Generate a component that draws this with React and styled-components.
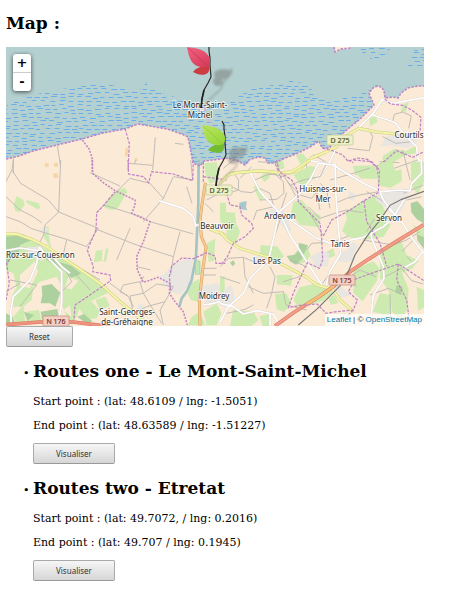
import React from 'react';
import styled, { createGlobalStyle } from 'styled-components';

const GlobalStyle = createGlobalStyle`
  body {
    margin: 0;
    background: #fff;
    color: #000;
    font: 11px/13px 'DejaVu Serif', serif;
  }
`;

const Page = styled.main`
  padding: 13px 28px 21px 6px;
`;

const Heading = styled.h2`
  margin: 0 0 14px;
  font-size: 17px;
  line-height: 20px;
  font-weight: bold;
`;

const MapFrame = styled.section`
  position: relative;
  height: 279px;
  overflow: hidden;
  background: #b5d0d0;
`;

const MapDrawing = styled.svg`
  display: block;
  width: 100%;
  height: 100%;
`;

const ZoomControl = styled.div`
  position: absolute;
  top: 7px;
  left: 7px;
  display: flex;
  flex-direction: column;
  border-radius: 3px;
  background: #fff;
  box-shadow: 0 1px 4px rgba(0, 0, 0, 0.65);
`;

const ZoomButton = styled.button`
  width: 18px;
  height: 18px;
  padding: 0;
  border: 0;
  background: none;
  color: #000;
  font: bold 13px/18px 'DejaVu Sans', sans-serif;

  & + & {
    height: 19px;
    border-top: 1px solid #ccc;
  }
`;

const Attribution = styled.div`
  position: absolute;
  right: 0;
  bottom: 0;
  padding: 0 2px;
  background: rgba(255, 255, 255, 0.7);
  color: #333;
  font: 8px/12px 'Liberation Sans', sans-serif;

  a {
    color: #0078a8;
    text-decoration: none;
  }
`;

const Button = styled.button`
  display: block;
  height: 21px;
  padding: 0 22px;
  border: 1px solid #aaa;
  border-bottom-color: #999;
  border-radius: 2px;
  background: linear-gradient(#f6f6f6, #d6d6d6);
  color: #333;
  font: 8px/19px 'Noto Sans', sans-serif;
`;

const RouteList = styled.ul`
  margin: 14px 0 0;
  padding: 0 0 0 27px;
  list-style-type: '• ';
`;

const RouteItem = styled.li`
  & + & {
    margin-top: 14px;
  }
`;

const Point = styled.p`
  margin: 0 0 11px;
`;

const Minor = styled.path`
  fill: none;
  stroke: #bdb9b5;
  stroke-width: 2.8;
`;
const Street = styled.path`
  fill: none;
  stroke: #fff;
  stroke-width: 5;
  stroke-linejoin: round;
`;
const StreetCase = styled(Street)`
  stroke: #d6cfc9;
  stroke-width: 7;
`;
const Yellow = styled(Street)`
  stroke: #f4f6a6;
  stroke-width: 6;
`;
const YellowCase = styled(Street)`
  stroke: #cbcb8c;
  stroke-width: 9;
`;
const Border = styled.path`
  fill: none;
  stroke: #c183c3;
  stroke-width: ${(p) => p.$w || 3.6};
  stroke-dasharray: ${(p) => (p.$w ? '6 4' : '9 4')};
`;
const Grass = styled.path`
  fill: #cdeab1;
`;
const Wood = styled.path`
  fill: #add19e;
`;
const Built = styled.path`
  fill: #e9e6e1;
`;
const Place = styled.text`
  font: 8px 'Noto Sans', sans-serif;
  fill: #2b2b2b;
  stroke: rgba(255, 255, 255, 0.7);
  stroke-width: 1.8px;
  paint-order: stroke;
  text-anchor: ${(p) => p.$anchor || 'middle'};
`;
const ShieldText = styled.text`
  font: 7px 'Noto Sans', sans-serif;
  fill: ${(p) => p.$ink};
  stroke: ${(p) => p.$ink};
  stroke-width: 0.2px;
  text-anchor: middle;
`;

const COAST =
  'M6 159 19 156 33 151 57 145 82 139 103 133 125 129 138 124 150 126 167 129 182 134 188 137 190 147 193 163 200 166 204 161 213 160 228 158 238 161 245 165 249 160 258 157 265 158 268 163 274 163 283 159 298 153 310 147 319 141 322 148 329 148 341 135 350 127 359 120 374 105 371 98 369 93 374 87 379 86 384 90 385 98 393 97 398 98 401 93 408 88 418 86 426 86';

const FLATS =
  'M6 106 16 99 26 96 48 92 62 89 80 86 98 83 103 81 108 84 122 88 134 91 143 89 146 82 152 88 165 94 178 98 200 104 228 104 238 97 252 88 268 86 290 80 306 84 320 98 350 98 366 89 380 84 V190 H6Z M354 47 H391 L386 57 372 60 366 55Z M416 47 H424 V70 L408 66Z';

const DASHES = (() => {
  const parts = [];
  let seed = 11;
  const random = () => {
    seed = (seed * 1103515245 + 12345) % 2147483648;
    return seed / 2147483648;
  };
  for (let y = 49; y < 168; y += 4) {
    for (let x = 2 + random() * 6; x < 424; x += 7 + random() * 3) {
      const dy = Math.round(random() * 2) - 1;
      parts.push(`M${x.toFixed(1)} ${y + dy + 0.5}h${(4 + random() * 2).toFixed(1)}`);
    }
  }
  return parts.join('');
})();

function Roads({ casing: Casing, line: Line, d }) {
  return (
    <>
      <Casing d={d} />
      <Line d={d} />
    </>
  );
}

function NorthWest() {
  return (
    <g transform="scale(.33333)">
      <path fill="#f7d5a7" d="M162 489h12v11h-12zM378 442l8 5-3 22h-9zM404 474h8v10h-8z" />
      <Minor d="M40 473V520M172 437 182 500M466 412 458 510M386 490 458 496M403 492 408 480M525 430 550 433" />
      <Border $w={4.5} d="M247 420 268 448 278 480 277 515" />
      <Border d="M375 386 388 430 384 515" />
    </g>
  );
}

function NorthEast() {
  return (
    <g transform="translate(226 30) scale(.33333)">
      <path fill="#fbead6" d="M326 50h50l-12 8-18-2-18 12z" />
      <Grass d="M148 392l22-3 6 26-22 5zM210 376l20-6 14 18-20 16zM430 265l20-8 4 20-22 12zM530 224l18-8-8 28-16 2zM470 378l36-22 32 8 34-18 4 22-40 8-32 20-34 4zM380 408l66-2 14 40h-56z" />
      <Built d="M480 320l50-14 40 12 4 22-30 14-52-8-30 4z" />
      <Minor d="M365 355 430 362 440 320 426 295M500 275 505 253 530 246 556 258 548 295M440 250l25-30M262 374l40 24M530 360 540 400 552 450M460 395 520 398M80 420 175 440M470 320 510 340 560 335M490 420 575 390M240 400 250 445M96 395l60 5" />
      <Roads casing={StreetCase} line={Street} d="M470 208 440 252 395 295M440 255 480 268 508 278 540 320 572 350 575 380 588 412M466 208 500 220 594 203M328 358 308 402 270 450M250 392 310 402 390 448" />
      <Roads casing={YellowCase} line={Yellow} d="M0 440 18 428 90 424 190 430 220 420 256 384 300 366 330 352 350 325 398 295 450 306 515 312" />
      <Border d="M476 208 495 222 530 226 560 242 585 262 582 305M290 355 320 362 350 375 366 394 395 384 425 388 450 410 470 398 512 362 560 382 594 365M452 412 460 450M148 402 166 445" />
    </g>
  );
}

function SouthWest() {
  return (
    <g transform="translate(0 160) scale(.33333)">
      <Grass d="M18 225 70 222 130 262 210 310 260 345 330 395 280 420 240 440 230 470 215 495 195 460 185 430 190 390 170 350 120 365 100 380 95 420 70 440 40 440 35 410 50 380 40 340 18 330zM344 95l30-12 8 12-28 48-18 8-26-10zM288 272l20-3-3 34-24 4zM318 265l8 2-8 38h-8zM50 108l20 12 4 14-16 22-12-2-5-20zM80 120l36 10 6 14-10 4-32-20zM132 200h14v26l8 40-18-26-8-20zM612 10l38-4 8 50-28 16-12-24zM660 128h18v60l-18-6zM620 250l26-14-4 66-16 4zM574 370l24-14v70l-26-6-9-20zM575 470l25-14 16 40h-52zM610 455l40-25 14 30-14 36h-30zM80 455l36-6 8 30-40 14zM40 470l30-35 6 55h-28zM286 420l30-10 14 28-30 12zM235 440l40-16 25 30-10 20-30 6z" />
      <path fill="#fbead6" d="M60 345l44-40 10 30-24 50-30-8zM205 350l30 12-20 26-20-4zM190 450l20-14 4 34zM20 335l16 8-6 40-12 8z" />
      <Wood d="M18 230 70 226 95 240 60 255 55 285 30 300 18 320zM110 262l70 45 34 10 30 24-30 12-25-25-35-18-40-30zM125 378l30-6 26 26-15 42-16-10-28 0 5-25zM122 455l50-8 8 42-50 8zM72 455l30 10-20 18zM18 460l20 10 8 22H18zM232 470l20-8 25 22-16 8z" />
      <Built d="M490 345 515 318 560 295 578 298 576 358 545 402 522 400 488 370zM416 430l14 5 10 20-15 12-16-14zM600 378l52-8 26 20v34l-60 10zM80 262l38-2 26 30-20 14-40-24zM122 204h22l-4 16h-18zM480 345l22 4-6 12-16-4z" />
      <path fill="#f7d5a7" d="M134 10h12v10h-12zM160 40h14v14h-14z" />
      <Minor d="M40 0 36 30 18 65M36 30 62 70 145 120 176 156 182 0M176 156 135 195 132 222 115 255M18 110 60 150 100 170 125 188M18 170 60 185 95 206 140 220 200 238 260 260 295 205 176 156M290 158 345 100 390 55 450 70 490 115 520 50M270 38 360 78M312 135 392 160 430 172M290 208 410 255 520 290M450 185 580 222M390 205 350 300M200 240 186 300M540 215 520 290 512 345M410 320 452 330M490 115 430 185M572 0 578 60 522 50M576 130 560 80M330 370 385 410 400 440M385 408 360 395 370 375 420 365 430 400 390 408 400 460 440 440 495 425 520 380 470 372 430 400 460 450 485 490M420 370 432 348M495 425 480 450 490 495M610 325H650M610 345H648M620 120 678 90M615 130 640 155M200 335 215 365 180 400M250 330 300 360M60 440 110 375 30 360M18 395 60 370M225 340 270 390" />
      <path d="M596 0 595 130 588 290 575 360 560 395 545 415 538 440" fill="none" stroke="#a3c4c4" strokeWidth="8" />
      <path d="M586 303h14v40h-14z" fill="#c2e5b1" stroke="#9ccba4" strokeWidth="2" />
      <Roads casing={StreetCase} line={Street} d="M118 260 110 310 90 360 40 410 32 455 34 497M118 260 150 300 185 335 185 430 178 470M150 280 185 320 210 340M18 272 60 264 118 272M476 122 550 145 580 170 588 200M605 195h-22M670 422 640 430 610 435" />
      <Roads casing={YellowCase} line={Yellow} d="M18 222H50L100 240 140 260 195 298 240 328 300 370 360 425 410 465 450 497M600 192 640 212 670 222 690 240" />
      <path d="M616 68 605 140 600 180 604 230 618 262 608 330 598 420 600 497" fill="none" stroke="#cf9e64" strokeWidth="9" />
      <path d="M616 68 605 140 600 180 604 230 618 262 608 330 598 420 600 497" fill="none" stroke="#f8cb8c" strokeWidth="6" />
      <path d="M18 494 120 486 220 486 330 500" fill="none" stroke="#d8745f" strokeWidth="11" />
      <path d="M18 494 120 486 220 486 330 500" fill="none" stroke="#ee947e" strokeWidth="8" />
      <Border $w={4.5} d="M276 0 278 40 310 68 345 92 405 120 405 135 395 160 450 185 432 240 410 290 412 330 430 367 475 352 510 370 508 400 525 425 550 455 562 495" />
      <Border d="M384 0 386 42 430 50 446 68 455 35 520 42 578 62 580 0M610 50 640 54 680 60M610 5v60M288 210 290 158 312 135 344 96M288 210 262 270 280 320 278 335 330 345 332 362 270 405 225 435 222 480M512 390 508 350 515 318 545 294 580 296 620 278 645 288 648 310 676 310M18 420 28 370 20 310 36 290" />
    </g>
  );
}

function SouthEast() {
  const trunk = 'M612 194 520 250 445 298 390 335 342 378 300 408 220 458 165 498';
  return (
    <g transform="translate(220 160) scale(.33333)">
      <Grass d="M2 155 45 158 48 190 60 215 45 255 28 252 20 240 20 195 4 190zM120 50l20-14 10 16-16 14zM100 80l14-6 16 40-10 10zM220 125l24-6 32 38 26 10-5 34-55-6-30-30zM220 45l50-28 18 5-16 22 15 10-44 24zM375 155l60-35 38-16 22 50-4 30 22 10-22 36-50 8-55-6-20-20 15-35zM475 12l42-12 8 32 20-4 0 36-34 20-38-8zM400 18l50 6-5 26-40-6zM572 5h40v60l-18 36-20-20zM170 345h48l-5 32-42-4zM165 402l34-2 15 28-22 28-22-8zM238 382l55-12 60 18-45 35-70 20-18-24zM122 255l50 4 20 30-18 18-20-14-35 4zM232 270l30-8 10 24-15 20-30 8-18-10zM400 330l60-26 18 20-8 40-42 60-28-25zM480 268l60-34 20 50 36 18-20 24-30 12 20 50-5 60-18 38-28-32-2-50-15-24-18-25zM480 400l38 6-10 60-50-10zM590 380l22 10v52l-18 10zM40 448l30 5 30 2 15 25-20 18H30zM118 468l30-5 5 35h-25zM0 355l14-8v50H0zM320 275l20-10 5 22-20 8zM580 195l20 14 14-10v48l-26-30zM375 190l30-5 5 20-24 6zM325 415l18-10 12 24-22 5z" />
      <Wood d="M200 288l24-4 14-14-2-22 28 8-18 40-18 18-18-10zM572 130l20-7 20 24v44l-22-14-16-20zM590 222l22 10v35l-20-26zM530 375l18 6-5 24-18-8zM30 308l10-7 6 10-8 8z" />
      <Built d="M465 120 480 92 520 90 570 94 560 120 545 150 535 162 515 165 495 140zM150 148h38l26 60-8 14-34-44-26-12zM270 290l36-18 22 8-4 38-38 6zM355 280l40-12 12 30-30 10-24-5zM320 378l30-8 44 36-44 10zM100 290l48-4-5 30-36-4zM20 382l16-5 12 50-25 16-23-5v-25zM380 265l20-20 14 14-14 22zM385 92l22 10-6 20-14-4z" />
      <path fill="#a5c9cb" d="M58 128l22-5-2 18 4 10-24-4z" />
      <path fill="#8fbfdd" d="M66 2h20v6l-12 6zM142 0h18v7l-14 2z" />
      <Minor d="M40 38 56 60 55 90 25 100M25 75 65 95 95 98 118 85M100 62 140 45 165 42 190 65 192 100 170 118 120 120M118 85 150 100 162 140 110 152 100 180M95 20 60 55M210 75 250 60 300 50 320 12M200 62 240 105 275 115 295 90M290 95 300 150M190 45 215 85 228 110M220 168 180 158 200 98M180 180 160 240M265 140 300 175 350 158 380 150 430 158M300 242 330 250 385 228M270 160 310 228M260 270 275 250 308 248M0 320 25 295 70 292 75 350 100 400M70 292 118 312M60 370 0 350M150 320 165 350 155 400 140 445M85 380 130 400 190 395 198 435 260 450M190 365 245 348M300 380 330 340 335 320M350 128 380 115 420 105 478 95M420 60 360 30M450 24 400 40 330 60M440 95 500 130M560 120 605 110M550 100 610 75M440 215 460 180 510 175M430 240 520 255 560 240 600 215M495 350 545 325 575 362 610 372M410 380 390 350 420 330 468 350M450 405 505 385 545 402M510 400 512 480M560 290 575 305M40 0 10 25M580 240 545 275M330 145 320 90 300 70M260 320 210 300M20 460 75 448 100 435" />
      <Roads casing={StreetCase} line={Street} d="M90 36 120 95 175 155 290 235 330 250 370 245 430 232 490 200 518 175 555 115M178 155 240 100 270 60 295 10 340 15M178 155 162 230 145 300 90 355 70 400 25 440 0 488M182 165 210 225 260 305 290 350 310 380M345 10 348 110 355 200 362 280 330 335 318 375M340 15 380 40 440 75 485 95 540 90 570 93 575 70 605 40 604 0M452 215 455 235 490 320 492 355 460 405 450 497M500 140 545 185 580 240 612 280M610 272 585 305 550 325M480 95 490 120 520 158M0 430 40 440 70 462 110 452 160 462 180 497M150 460 150 497" />
      <Roads casing={YellowCase} line={Yellow} d="M0 70 25 45 50 38 125 32 180 38 215 35 240 20 270 0M0 215 22 240 60 265 140 290 200 320 260 352 290 375 338 388 360 420 400 455" />
      <path d={trunk} fill="none" stroke="#d07761" strokeWidth="11" />
      <path d={trunk} fill="none" stroke="#f39b86" strokeWidth="8" />
      <path d="M342 378 300 408 260 433" fill="none" stroke="#f6bd75" strokeWidth="8" />
      <path d="M612 94 545 118 510 136 480 180 440 230 405 285 385 335 360 378 290 448 235 495" fill="none" stroke="#777" strokeWidth="3.5" />
      <Border d="M170 0 178 35 215 60 232 90 235 125 262 152 300 190 305 235 308 300 298 325 262 308 240 355 220 400 205 443 240 436 292 432 318 460 350 455 400 450 412 420 385 395 405 358 440 345 535 312 612 362M20 100 30 135 60 140 65 165 95 190 100 205 75 230 40 250 22 290 5 312M310 228 335 180 390 150 432 122 475 98 478 30 455 5 400 0M432 122 440 185 480 250 500 318M535 312 530 360 560 420 570 497M385 0 400 8M400 450 380 470" />
    </g>
  );
}

const SHIELDS = {
  d: { fill: '#ebf0c9', edge: '#c3c896', ink: '#53562d' },
  n: { fill: '#f3cfc6', edge: '#c88a7d', ink: '#7d3428' },
};

function Shield({ x, y, kind, children }) {
  const c = SHIELDS[kind];
  return (
    <g>
      <rect x={x - 13} y={y - 5} width="26" height="10" rx="1" fill={c.fill} stroke={c.edge} strokeWidth="0.7" />
      <ShieldText x={x} y={y + 3} $ink={c.ink}>{children}</ShieldText>
    </g>
  );
}

function LeafMarker({ x, y, light, main, under, vein }) {
  const id = `leaf-${main.slice(1)}`;
  return (
    <g transform={`translate(${x} ${y})`}>
      <defs>
        <linearGradient id={id} x1="0" y1="0" x2="0.6" y2="1">
          <stop offset="0" stopColor={light} />
          <stop offset="1" stopColor={main} />
        </linearGradient>
      </defs>
      <g filter="url(#soft)" opacity="0.5">
        <path d="M13-35C17-40 23-39 30-38C31-33 26-29 20-28C24-26 22-23 17-22C13-22 12-25 12-28L14-30Z" fill="#777" />
        <path d="M31-40 30-34 22-25 20-19C12-12 6-7 2 0" fill="none" stroke="#777" strokeWidth="1.3" />
      </g>
      <path d="M-8-36C-5-40 0-42 8-43C9-39 8-35 5-34C0-32-4-34-8-36Z" fill={under} />
      <path d="M6-65 8-61 8-57 9-50 9-43 10-31 7-25 3-18 1-9 0 0" fill="none" stroke="#2a2a2a" strokeWidth="1.2" />
      <path d="M3-18 1-9 0 0" fill="none" stroke="#222" strokeWidth="1.6" />
      <path d="M-14-61C-6-60 2-59 6-54C10-50 10-45 7-42C1-39-6-42-9-46C-12-50-13-56-14-61Z" fill={`url(#${id})`} />
      <path d="M-13-60Q-2-51 6-42" fill="none" stroke={vein} strokeWidth="0.6" />
    </g>
  );
}

function RouteMap() {
  return (
    <MapDrawing viewBox="6 47 418 279" preserveAspectRatio="xMidYMid slice" role="img" aria-label="Map of Le Mont-Saint-Michel bay">
      <defs>
        <clipPath id="flats"><path d={FLATS} /></clipPath>
        <filter id="soft" x="-30%" y="-30%" width="160%" height="160%"><feGaussianBlur stdDeviation="0.8" /></filter>
      </defs>
      <path d={DASHES} clipPath="url(#flats)" fill="none" stroke="#6aaeea" strokeWidth="1" />
      <path d={`${COAST} V328 H6Z`} fill="#fbead6" />
      <NorthWest />
      <NorthEast />
      <SouthWest />
      <SouthEast />
      <path d={COAST} fill="none" stroke="#bd87c7" strokeWidth="1.6" strokeDasharray="2.4 1.4" />
      <path d="M334 47 335 52 341 49 351 48" fill="none" stroke="#bd87c7" strokeWidth="1.6" strokeDasharray="2.4 1.4" />
      <path d="M201 110 213 127 228 151" fill="none" stroke="#d5b9ce" strokeWidth="1.2" strokeDasharray="2 1" />
      <circle cx="202" cy="109" r="3" fill="#e9dddd" stroke="#c49acb" strokeWidth="0.8" />
      <Place x="200" y="108">Le Mont-Saint-</Place>
      <Place x="200" y="118">Michel</Place>
      <Place x="409" y="138">Courtils</Place>
      <Place x="323" y="192">Huisnes-sur-</Place>
      <Place x="323" y="202">Mer</Place>
      <Place x="280" y="219">Ardevon</Place>
      <Place x="389" y="221">Servon</Place>
      <Place x="217" y="229">Beauvoir</Place>
      <Place x="340" y="247">Tanis</Place>
      <Place x="267" y="264">Les Pas</Place>
      <Place x="6" y="258" $anchor="start">Roz-sur-Couesnon</Place>
      <Place x="214" y="299">Moidrey</Place>
      <Place x="127" y="315">Saint-Georges-</Place>
      <Place x="127" y="325">de-Gréhaigne</Place>
      <Shield x={340} y={140} kind="d">D 275</Shield>
      <Shield x={219} y={190} kind="d">D 275</Shield>
      <Shield x={342} y={280} kind="n">N 175</Shield>
      <Shield x={56} y={321} kind="n">N 176</Shield>
      <LeafMarker x={201} y={108} light="#f0647f" main="#d93f5e" under="#cc3d42" vein="#b92c4c" />
      <LeafMarker x={216} y={186} light="#b9e65e" main="#9ad63c" under="#74bb34" vein="#86c234" />
    </MapDrawing>
  );
}

const ROUTES = [
  {
    name: 'Routes one - Le Mont-Saint-Michel',
    start: '(lat: 48.6109 / lng: -1.5051)',
    end: '(lat: 48.63589 / lng: -1.51227)',
  },
  {
    name: 'Routes two - Etretat',
    start: '(lat: 49.7072, / lng: 0.2016)',
    end: '(lat: 49.707 / lng: 0.1945)',
  },
];

export default function App() {
  return (
    <Page>
      <GlobalStyle />
      <Heading>Map :</Heading>
      <MapFrame>
        <RouteMap />
        <ZoomControl>
          <ZoomButton type="button" title="Zoom in">+</ZoomButton>
          <ZoomButton type="button" title="Zoom out">-</ZoomButton>
        </ZoomControl>
        <Attribution>
          <a href="#leaflet">Leaflet</a> | © <a href="#osm">OpenStreetMap</a>
        </Attribution>
      </MapFrame>
      <Button type="button">Reset</Button>
      <RouteList>
        {ROUTES.map((route) => (
          <RouteItem key={route.name}>
            <Heading>{route.name}</Heading>
            <Point>Start point : {route.start}</Point>
            <Point>End point : {route.end}</Point>
            <Button type="button">Visualiser</Button>
          </RouteItem>
        ))}
      </RouteList>
    </Page>
  );
}
